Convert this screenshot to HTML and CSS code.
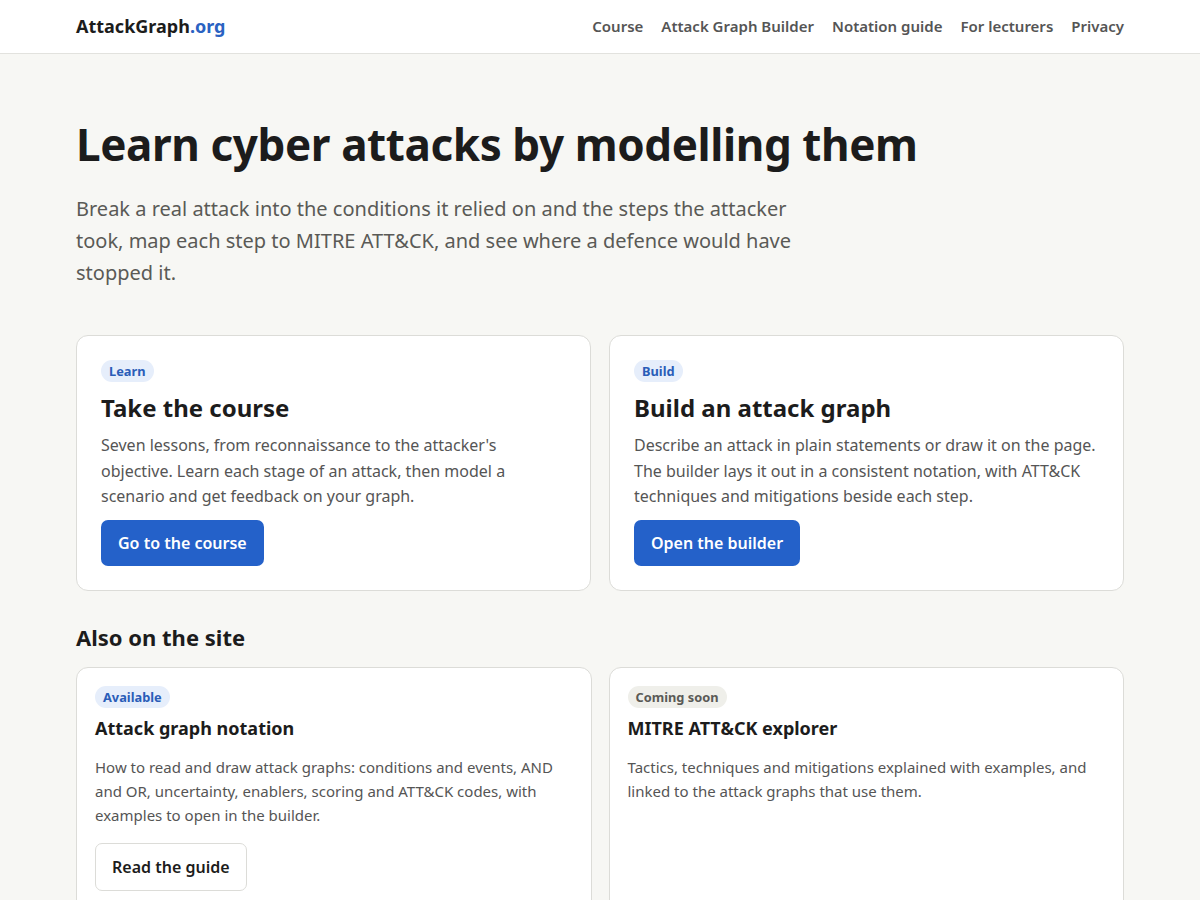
FILE: index.html
```html
<!DOCTYPE html>
<html lang="en">
<head>
<meta charset="utf-8">
<title>AttackGraph.org</title>
<link rel="stylesheet" href="styles.css">
</head>
<body>
<header class="site-header">
  <div class="wrap header-inner">
    <a class="logo" href="#">AttackGraph<span class="logo-tld">.org</span></a>
    <nav class="nav">
      <a href="#">Course</a>
      <a href="#">Attack Graph Builder</a>
      <a href="#">Notation guide</a>
      <a href="#">For lecturers</a>
      <a href="#">Privacy</a>
    </nav>
  </div>
</header>
<main class="wrap main">
  <section class="hero">
    <h1>Learn cyber attacks by modelling them</h1>
    <p class="lead">Break a real attack into the conditions it relied on and the steps the attacker took, map each step to MITRE ATT&amp;CK, and see where a defence would have stopped it.</p>
  </section>

  <section class="grid primary">
    <div class="card big">
      <span class="badge blue">Learn</span>
      <h2>Take the course</h2>
      <p>Seven lessons, from reconnaissance to the attacker's objective. Learn each stage of an attack, then model a scenario and get feedback on your graph.</p>
      <a class="btn primary-btn" href="#">Go to the course</a>
    </div>
    <div class="card big">
      <span class="badge blue">Build</span>
      <h2>Build an attack graph</h2>
      <p>Describe an attack in plain statements or draw it on the page. The builder lays it out in a consistent notation, with ATT&amp;CK techniques and mitigations beside each step.</p>
      <a class="btn primary-btn" href="#">Open the builder</a>
    </div>
  </section>

  <h3 class="section-title">Also on the site</h3>
  <section class="grid secondary">
    <div class="card small">
      <span class="badge blue">Available</span>
      <h4>Attack graph notation</h4>
      <p>How to read and draw attack graphs: conditions and events, AND and OR, uncertainty, enablers, scoring and ATT&amp;CK codes, with examples to open in the builder.</p>
      <a class="btn outline-btn" href="#">Read the guide</a>
    </div>
    <div class="card small">
      <span class="badge grey">Coming soon</span>
      <h4>MITRE ATT&amp;CK explorer</h4>
      <p>Tactics, techniques and mitigations explained with examples, and linked to the attack graphs that use them.</p>
    </div>
  </section>
</main>
</body>
</html>
```

FILE: styles.css
```css
* { box-sizing: border-box; }
html, body { margin: 0; padding: 0; }
body {
  background: #f7f7f4;
  font-family: "Noto Sans", "Open Sans", sans-serif;
  color: #1c1c1c;
}
a { text-decoration: none; }
.wrap { width: 1048px; margin: 0 auto; }

.site-header {
  background: #fff;
  border-bottom: 1px solid #e2e2de;
  height: 54px;
}
.header-inner {
  height: 52px;
  display: flex;
  align-items: center;
  justify-content: space-between;
}
.logo {
  font-size: 18px;
  font-weight: 700;
  color: #1c1c1c;
}
.logo-tld { color: #2a62c2; }
.nav { display: flex; gap: 18px; }
.nav a {
  font-size: 15px;
  font-weight: 600;
  color: #555;
}

.hero { padding-top: 62px; }
.hero h1 {
  margin: 0;
  font-size: 44px;
  line-height: 56px;
  font-weight: 700;
  letter-spacing: -0.4px;
  color: #1c1c1c;
}
.lead {
  margin: 21px 0 0;
  max-width: 730px;
  font-size: 20px;
  line-height: 32px;
  color: #5a5a56;
}

.grid {
  display: grid;
  grid-template-columns: 1fr 1fr;
  gap: 18px;
}
.primary { margin-top: 46px; }

.card {
  background: #fff;
  border: 1px solid #dcdcd8;
  border-radius: 12px;
  display: flex;
  flex-direction: column;
  align-items: flex-start;
}
.card.big { padding: 24px 24px 24px; }
.card.small { padding: 18px 18px 24px; min-height: 260px; }

.badge {
  display: inline-block;
  font-size: 12.8px;
  font-weight: 700;
  line-height: 22px;
  height: 22px;
  padding: 0 8px;
  border-radius: 999px;
}
.badge.blue { background: #e6eefb; color: #2a5db8; }
.badge.grey { background: #efefea; color: #5a5a56; }

.card h2 {
  margin: 10px 0 0;
  font-size: 24px;
  line-height: 32px;
  font-weight: 700;
}
.card.big p {
  margin: 9px 0 0;
  font-size: 16px;
  line-height: 25.6px;
  color: #555;
}

.btn {
  display: inline-flex;
  align-items: center;
  height: 46px;
  padding: 0 17px;
  border-radius: 7px;
  font-size: 16px;
  font-weight: 600;
}
.primary-btn {
  margin-top: 10px;
  background: #2461c9;
  color: #fff;
}
.outline-btn {
  margin-top: 16px;
  background: #fff;
  color: #1c1c1c;
  border: 1px solid #dcdcd8;
  height: 48px;
  padding: 0 16px;
}

.section-title {
  margin: 31px 0 15px;
  font-size: 22px;
  line-height: 30px;
  font-weight: 700;
}
.secondary { gap: 17px; }
.card h4 {
  margin: 8px 0 0;
  font-size: 18px;
  line-height: 24px;
  font-weight: 700;
}
.card.small p {
  margin: 15px 0 0;
  font-size: 15px;
  line-height: 24px;
  color: #555;
}
```
